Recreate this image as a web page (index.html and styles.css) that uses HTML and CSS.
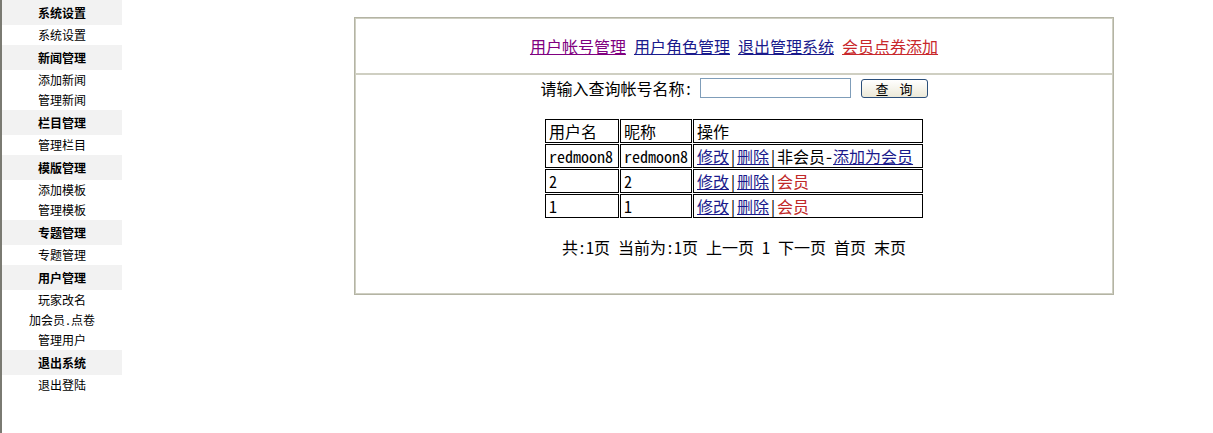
FILE: index.html
```html
<!DOCTYPE html>
<html lang="zh-CN">
<head>
  <meta charset="UTF-8" />
  <title>用户帐号管理</title>
  <link rel="stylesheet" href="styles.css">
</head>
<body>
  <div class="page">

    <aside class="sidebar">
      <div class="menu-title">系统设置</div>
      <a class="menu-item" href="#">系统设置</a>
      <div class="menu-title">新闻管理</div>
      <a class="menu-item" href="#">添加新闻</a>
      <a class="menu-item" href="#">管理新闻</a>
      <div class="menu-title">栏目管理</div>
      <a class="menu-item" href="#">管理栏目</a>
      <div class="menu-title">模版管理</div>
      <a class="menu-item" href="#">添加模板</a>
      <a class="menu-item" href="#">管理模板</a>
      <div class="menu-title">专题管理</div>
      <a class="menu-item" href="#">专题管理</a>
      <div class="menu-title">用户管理</div>
      <a class="menu-item" href="#">玩家改名</a>
      <a class="menu-item" href="#">加会员.点卷</a>
      <a class="menu-item" href="#">管理用户</a>
      <div class="menu-title">退出系统</div>
      <a class="menu-item" href="#">退出登陆</a>
    </aside>

    <main class="main">
      <table class="frame">
        <tr>
          <td class="nav-cell">
            <a class="visited" href="#">用户帐号管理</a>
            <a href="#">用户角色管理</a>
            <a href="#">退出管理系统</a>
            <a class="red" href="#">会员点券添加</a>
          </td>
        </tr>
        <tr>
          <td class="content-cell">
            <form class="search">
              <label for="account">请输入查询帐号名称:</label>
              <input type="text" id="account" />
              <button type="button">查 询</button>
            </form>

            <table class="list">
              <tr>
                <th class="col-name">用户名</th>
                <th class="col-nick">昵称</th>
                <th class="col-op">操作</th>
              </tr>
              <tr>
                <td>redmoon8</td>
                <td>redmoon8</td>
                <td><a href="#">修改</a>|<a href="#">删除</a>|非会员-<a href="#">添加为会员</a></td>
              </tr>
              <tr>
                <td>2</td>
                <td>2</td>
                <td><a href="#">修改</a>|<a href="#">删除</a>|<span class="member">会员</span></td>
              </tr>
              <tr>
                <td>1</td>
                <td>1</td>
                <td><a href="#">修改</a>|<a href="#">删除</a>|<span class="member">会员</span></td>
              </tr>
            </table>

            <p class="pager">共:1页 当前为:1页 上一页 1 下一页 首页 末页</p>
          </td>
        </tr>
      </table>
    </main>

  </div>
</body>
</html>
```

FILE: styles.css
```css
* {
  margin: 0;
  padding: 0;
  box-sizing: border-box;
}

body {
  font-family: "Noto Sans CJK SC", sans-serif;
  font-size: 16px;
  font-feature-settings: "hwid" 1;
  color: #000;
  background-color: #fff;
}

a {
  color: #1a1a8c;
}

.page {
  display: flex;
  min-height: 100vh;
}

/* left menu */

.sidebar {
  flex: none;
  width: 122px;
  border-left: 2px solid #7a7a72;
  font-size: 12px;
  text-align: center;
}

.menu-title {
  height: 25px;
  line-height: 25px;
  font-weight: bold;
  background-color: #f2f2f2;
}

.menu-item {
  display: block;
  height: 20px;
  line-height: 20px;
  color: #000;
  text-decoration: none;
}

/* main frame */

.main {
  flex: 1;
  padding: 17px 0 0 232px;
}

.frame {
  width: 760px;
  border: 1px solid #b4b4a4;
  border-spacing: 0;
}

.frame > tbody > tr > td {
  border: 1px solid #cfcfc2;
  text-align: center;
  vertical-align: middle;
}

.nav-cell {
  height: 56px;
  line-height: 20px;
}

.nav-cell .visited {
  color: #800080;
}

.nav-cell .red {
  color: #c8282c;
}

.frame > tbody > tr > td.content-cell {
  height: 220px;
  vertical-align: top;
}

.search {
  display: flex;
  justify-content: center;
  align-items: center;
  height: 25px;
  padding-top: 1px;
  line-height: 20px;
}

.search input {
  width: 151px;
  height: 20px;
  margin-left: 7px;
  border: 1px solid #7f9db9;
  font-family: inherit;
}

.search button {
  width: 67px;
  height: 19px;
  margin-left: 10px;
  border: 1px solid #2b4f7a;
  border-radius: 3px;
  background: linear-gradient(#ffffff, #ece9d8);
  font-family: inherit;
  font-size: 13px;
  line-height: 17px;
  letter-spacing: 4px;
  text-indent: 4px;
}

.list {
  margin: 18px auto 0;
  border-spacing: 1px;
}

.list th,
.list td {
  height: 24px;
  padding: 0 3px;
  border: 1px solid #000;
  font-weight: normal;
  text-align: left;
  line-height: 20px;
  white-space: nowrap;
}

.col-name {
  width: 74px;
}

.col-nick {
  width: 71px;
}

.col-op {
  width: 230px;
}

.member {
  color: #c02828;
}

.pager {
  margin-top: 18px;
  line-height: 20px;
  text-align: center;
}
```
